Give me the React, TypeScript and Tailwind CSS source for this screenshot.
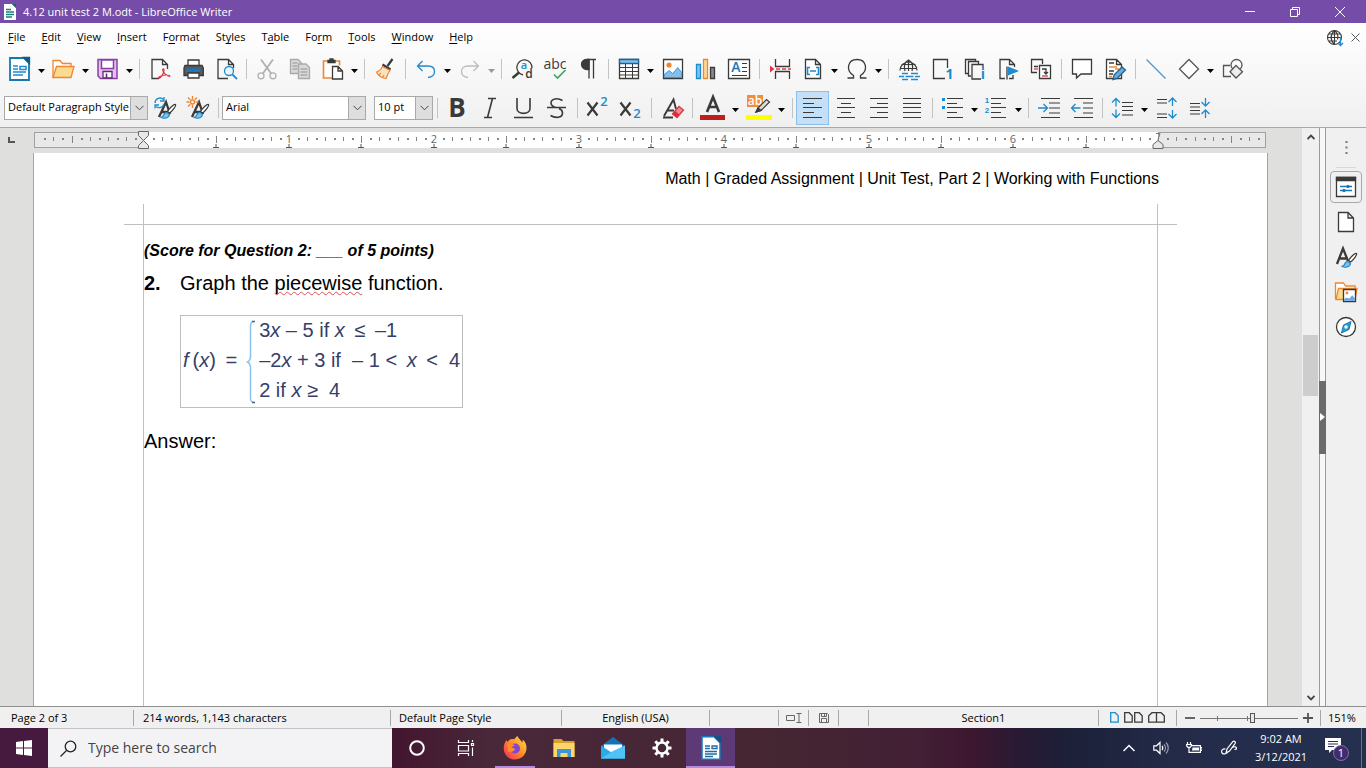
import type { ReactNode } from "react";

const INK = "#3a3a38";
const BLUE = "#1e8bcd";
const ORANGE = "#ed8733";

function Svg({ children, box = "0 0 24 24", className = "h-6 w-6" }: { children: ReactNode; box?: string; className?: string }) {
  return (
    <svg viewBox={box} className={`shrink-0 overflow-visible ${className}`} fill="none" stroke={INK} strokeWidth="1.3" aria-hidden="true">
      {children}
    </svg>
  );
}

function Glyph({ x, y, size, fill = INK, weight = 400, family = "Open Sans", children }: {
  x: number; y: number; size: number; fill?: string; weight?: number; family?: string; children: string;
}) {
  return (
    <text x={x} y={y} fontSize={size} fill={fill} stroke="none" fontWeight={weight} fontFamily={`"${family}", sans-serif`} textAnchor="middle">
      {children}
    </text>
  );
}

const brush = (
  <>
    <path d="M22.5 8.500c1 1-3 6.500-6 8.500l-2-1.500c2-3.500 7-8 8-7z" fill="#fff" strokeWidth="1.200" />
    <path d="M14 16.500c-2 0-3 1-3.500 3-.3 1.200-1.500 1.500-2.500 1.800 2.500 1.700 8 1.200 8.500-2.800z" fill="#83beec" stroke={BLUE} strokeWidth="1.200" />
  </>
);

function Lines({ rows }: { rows: [number, number][] }) {
  return <path d={rows.map(([a, b], i) => `M${a} ${2.5 + i * 5 - (i > 1 ? 1 : 0)}H${b}`).join("")} strokeWidth="1.200" />;
}

const icons: Record<string, ReactNode> = {
  "New": (
    <>
      <path d="M2 1h14l5 5v17H2z" fill="#fff" stroke="#1578b0" strokeWidth="1.800" />
      <path d="M15.500.5H21.500V6.500z" fill="#0d5c8c" stroke="#0d5c8c" />
      <path d="M5 9h5M5 12h5M5 15h13M5 18h10M12 9.500h6v3h-6z" stroke={BLUE} strokeWidth="1.500" />
    </>
  ),
  "Open": (
    <>
      <path d="M1 20.500V3.500h7l2.500 3H19v3" fill="#fff" stroke={ORANGE} />
      <path d="M1 20.500L4.500 9.500H22L19 20.500z" fill="#fbdb8f" stroke={ORANGE} />
    </>
  ),
  "Save": (
    <>
      <path d="M2 2.500h19v19H4.500L2 19z" fill="#e3c1ee" stroke="#8e3cab" strokeWidth="1.500" />
      <path d="M5.500 3v8.500h12V3z" fill="#fff" stroke="#8e3cab" strokeWidth="1.500" />
      <path d="M7 21v-6.500h9V21z" fill="#fff" stroke="#5e2d70" />
      <path d="M10.500 16.500V21" stroke="#5e2d70" strokeWidth="1.600" />
    </>
  ),
  "Export as PDF": (
    <>
      <path d="M11 21.500H4V2.500h10.500l5 5V12M14.500 2.500v5h5" />
      <path d="M15 12c2-1 .8 4-1 6.500s-3 3.500-3.500 2.500 5-3 7-3 4.500 0 4.500 1-5-.8-6.500-4-1-2.800-.5-3z" stroke="#dc3848" strokeWidth="1.200" />
    </>
  ),
  "Print": (
    <>
      <path d="M7 9V3h11v6" fill="#fff" />
      <path d="M4 8.500h17l1.300 2.500v7.500H3V11z" fill="#5a5a5a" />
      <path d="M6 11.500h13l1 3.500H5z" fill="#1b77bd" stroke="none" />
      <path d="M7 16h11v5H7z" fill="#fff" />
    </>
  ),
  "Print Preview": (
    <>
      <path d="M14 21.500H4V2.500h10.500l5 5V11M14.500 2.500v5h5" />
      <circle cx="15" cy="14" r="4.500" fill="#e8f5fd" stroke={BLUE} />
      <path d="M18.300 17.300L23 22" stroke={BLUE} strokeWidth="1.800" />
    </>
  ),
  "Cut": (
    <g stroke="#b0b0b0">
      <path d="M6 2.500l10.500 14.500M18 2.500L7.500 17" strokeWidth="1.800" />
      <circle cx="6" cy="18.800" r="3" /><circle cx="18" cy="18.800" r="3" />
    </g>
  ),
  "Copy": (
    <g stroke="#a9a9a9" fill="#d9d9d9">
      <path d="M2.500 2.500h7.500l3.500 3.500v10.500h-11z" />
      <path d="M4.500 6h5M4.500 9h5M4.500 12h5" />
      <path d="M10.500 7h7.500l3.500 3.500v11h-11z" />
      <path d="M12.500 12h7M12.500 15h7M12.500 18h7" />
    </g>
  ),
  "Paste": (
    <>
      <path d="M11 21H2.500V4h16v4.500" fill="#fff" stroke={ORANGE} strokeWidth="1.600" />
      <path d="M7 5.500v-2h2V2h3v1.500h2v2z" fill={INK} />
      <path d="M11.500 9.500h5.500l4.500 4.500v8h-10zM17 9.500V14h4.500" fill="#fff" />
    </>
  ),
  "Clone Formatting": (
    <>
      <path d="M19.500 2l-5 7" strokeWidth="2.200" />
      <path d="M9.500 7.500l8 5" strokeWidth="2.200" />
      <path d="M9.500 9.500c-1.500 3-4 5-6 5.500 1.500 3.500 5 6 9.500 6.500 1-3 2.500-6 4-8z" fill="#fbe3c0" stroke={ORANGE} strokeWidth="1.200" />
      <path d="M6 18l2-2M9.500 20.500l1.500-2.500" stroke={ORANGE} />
    </>
  ),
  "Undo": <path d="M8.500 4L3.500 9l5 5M3.500 9H14c4.500 0 6.500 2.500 6.500 5.500S18 20 14 20.500" stroke={BLUE} />,
  "Redo": <path d="M15.500 4l5 5-5 5M20.500 9H10c-4.500 0-6.500 2.500-6.500 5.500S6 20 10 20.500" stroke="#bcbcbc" />,
  "Find and Replace": (
    <>
      <path d="M13 18A7.600 7.600 0 1 1 22 11" />
      <path d="M9 15.500l-6.500 5.500" strokeWidth="2.400" />
      <Glyph x={14} y={12} size={11} fill={BLUE} weight={600}>a</Glyph>
      <Glyph x={19} y={21} size={12} weight={600}>d</Glyph>
    </>
  ),
  "Check Spelling": (
    <>
      <Glyph x={12} y={12} size={14}>abc</Glyph>
      <path d="M11 17.500l3.500 3.500 8-8" stroke="#3ba45e" strokeWidth="1.600" />
    </>
  ),
  "Formatting Marks": (
    <>
      <path d="M11 2.500H20M13 2.500V21.500M17.500 2.500V21.500" />
      <path d="M13 2.500C3 1 3 13.500 13 12.500z" fill={INK} />
    </>
  ),
  "Insert Table": (
    <>
      <path d="M2.500 2.500h19v19h-19z" fill="#fff" />
      <path d="M2.500 2.500h19v4h-19z" fill="#83beec" stroke="#1565a0" />
      <path d="M2.500 10.500h19M2.500 14.500h19M2.500 18h19M8.500 7v14M15.500 7v14" strokeWidth="1" />
    </>
  ),
  "Insert Image": (
    <>
      <path d="M2.500 2.500h19v19h-19z" fill="#fff" />
      <circle cx="8" cy="8" r="2.600" fill={ORANGE} stroke="none" />
      <path d="M3.200 20.500v-3l5-4 3.500 3 5-6 4 5v5z" fill="#83beec" stroke={BLUE} strokeWidth=".8" />
    </>
  ),
  "Insert Chart": (
    <>
      <path d="M2.500 7.500h4v14h-4z" fill="#83beec" stroke={BLUE} />
      <path d="M9.500 2.500h4v19h-4z" fill="#fbdb9f" stroke={ORANGE} />
      <path d="M16.500 10.500h4v11h-4z" fill="#888" />
    </>
  ),
  "Insert Text Box": (
    <>
      <path d="M1.500 2.500h21v19h-21z" fill="#fff" />
      <Glyph x={9} y={15} size={14} fill="#1779ba" weight={600}>A</Glyph>
      <path d="M15 6.500h5M15 10.500h5M15 14.500h5M5 18.500h15" strokeWidth="1.200" />
    </>
  ),
  "Insert Page Break": (
    <>
      <path d="M7.500 2v7.500h14V2M7.500 22v-7.500h14V22" />
      <path d="M8 12h15" stroke="#dc3848" strokeDasharray="4 2" />
      <path d="M2 8.500l4.500 3.500L2 15.500z" fill="#dc3848" stroke="none" />
    </>
  ),
  "Insert Field": (
    <>
      <path d="M4.500 2.500h10l5 5v14h-15zM14.500 2.500v5h5" fill="#fff" />
      <path d="M9 10.500H6.500v7H9M15 10.500h2.500v7H15M9 14h6" stroke={BLUE} strokeWidth="1.600" />
    </>
  ),
  "Special Character": <path d="M2.500 21h6v-2.500C0 13 3 2.500 12 2.500S24 13 15.500 18.500V21h6" />,
  "Insert Hyperlink": (
    <>
      <path d="M3 13.500a8.500 8.500 0 1 1 17 0M3 11.500h17M4.500 7.500h14M11.500 3v11M8 14c-1.500-5-.5-9 3.500-11 4 2 5 6 3.500 11" strokeWidth="1.200" />
      <path d="M5 16.500h6M14 16.500h7M2 19.500h5M8.500 19.500h8M18 19.500h5M5 22.500h6M14 22.500h7" stroke={BLUE} strokeWidth="1.700" />
    </>
  ),
  "Insert Footnote": (
    <>
      <path d="M15 21.500H3.500V2.500h14V11" />
      <Glyph x={19.500} y={22} size={14} fill={BLUE} weight={700}>1</Glyph>
    </>
  ),
  "Insert Endnote": (
    <>
      <path d="M5 16.500H2.500v-14h10v2M8 19H5.500V4.500h10V7M18 22H9V7.500h11V11" />
      <Glyph x={20} y={22} size={14} fill={BLUE} weight={700}>i</Glyph>
    </>
  ),
  "Insert Bookmark": (
    <>
      <path d="M9 21.500H4V2.500h9.500l5 5V10M13.500 2.500v5h5M11 9.500v13M17 18v3.500h-4" />
      <path d="M12 9.500l11 4.500-11 4.500z" fill={BLUE} stroke="none" />
    </>
  ),
  "Insert Cross-reference": (
    <>
      <path d="M8 15.500H2.500v-13h11V7M5 9.500h4" />
      <path d="M5 12h4" stroke="#dc3848" />
      <path d="M10.500 8.500h11v13h-11zM13 12h4v5M15 15l2 2 2-2" fill="#fff" />
      <path d="M13 19h6" stroke="#dc3848" />
    </>
  ),
  "Insert Comment": <path d="M2.500 2.500h19v14.500H11l-4.500 4v-4h-4z" fill="#fff" />,
  "Track Changes": (
    <>
      <path d="M3.500 2.500h10l5 5v14h-15zM13.500 2.500v5h5M6 6h5M6 14h5M6 17h4" fill="#fff" />
      <path d="M6 10h8M12 12h4M6 19.500h3" stroke={ORANGE} />
      <path d="M10 22.500l1-4.500 8-8 3.500 3-8.500 8.500z" fill="#6fa9d6" stroke="#1b6699" />
    </>
  ),
  "Insert Line": <path d="M2.500 2.500l19 19" stroke="#4a97d6" />,
  "Basic Shapes": <path d="M12 2.500l9.500 9.500-9.500 9.500L2.500 12z" fill="#fff" stroke="#555" />,
  "Show Draw Functions": (
    <g stroke="#555">
      <path d="M10 19.500H2.500v-11H9" />
      <circle cx="15.500" cy="8" r="5.500" />
      <path d="M15 8.500l6.500 6.200-6.500 6.300-6-6.300z" fill="#eee" />
    </g>
  ),
  "Update Style": (
    <>
      <path d="M6 21L13 6l4 12M8.500 16h7" strokeWidth="2.300" />
      <path d="M2 7a5 5 0 0 1 8.500-3.500M11 1v4H7M11 8a5 5 0 0 1-8 2.500M2 12.500V9h4" stroke={BLUE} />
      {brush}
    </>
  ),
  "New Style": (
    <>
      <path d="M6 21L13 6l4 12M8.500 16h7" strokeWidth="2.300" />
      <path d="M6.500 0v3M6.500 9v3M.5 6h3M9.500 6h3M2 1.500l2.300 2.300M11 1.500L8.700 3.800M2 10.500l2.300-2.300" stroke={ORANGE} />
      <circle cx="6.500" cy="6" r="2" stroke={ORANGE} />
      {brush}
    </>
  ),
  "Bold": <Glyph x={11} y={21} size={26} weight={700}>B</Glyph>,
  "Italic": <path d="M9 2.500h8M5 21.500h8M13.500 2.500l-5 19" strokeWidth="1.600" />,
  "Underline": <path d="M5 2v10.500c0 6.500 13 6.500 13 0V2M2 21.500h19" strokeWidth="1.600" />,
  "Strikethrough": (
    <path d="M17.500 4.500c-5-3-11.500-2-11.500 2.500 0 3 3 4 5.500 4.700M2 11.500h19M14 12.500c2.500 1 3.500 2.500 3.500 4.500 0 5-7 5.500-12 2.500" strokeWidth="1.600" />
  ),
  "Superscript": (
    <>
      <path d="M1.500 6.500l10 13M11.500 6.500l-10 13" strokeWidth="2.200" />
      <Glyph x={18} y={10} size={13} fill={BLUE} weight={600}>2</Glyph>
    </>
  ),
  "Subscript": (
    <>
      <path d="M1.500 6.500l10 13M11.500 6.500l-10 13" strokeWidth="2.200" />
      <Glyph x={18} y={22} size={13} fill={BLUE} weight={600}>2</Glyph>
    </>
  ),
  "Clear Formatting": (
    <>
      <path d="M4 20L13.500 3.500 16 13M7 14.500h7M3 21.500h10" strokeWidth="1.900" />
      <path d="M12.500 18l6.500-7.500 4.500 3.500-6.500 7.500z" fill="#f08a92" stroke="#dc3848" />
      <path d="M12.500 18l2.500-3 4.500 3.500-2.500 3z" fill="#dc2c3c" stroke="none" />
    </>
  ),
  "Font Color": (
    <>
      <path d="M6 16L12 1l6 15M8 11h8" strokeWidth="2.600" />
      <path d="M-1 21.500h25" stroke="#bf1e1e" strokeWidth="5" />
    </>
  ),
  "Highlighting": (
    <>
      <path d="M0-1h16v12H0z" fill="#f18d3d" stroke="none" />
      <Glyph x={8} y={9} size={12} fill="#fff" weight={600}>ab</Glyph>
      <path d="M11 12l8.500-8.500 3 2.500L14 14.500l-5 1.500z" fill="#ddd" strokeWidth="1.200" />
      <path d="M9 16l2-4 3 2.500z" fill={INK} />
      <path d="M-1 21.500h26" stroke="#ffff00" strokeWidth="5" />
    </>
  ),
  "Align Left": <Lines rows={[[2, 21], [2, 13], [2, 21], [2, 13], [2, 21]]} />,
  "Align Center": <Lines rows={[[3, 21], [7, 17], [3, 21], [7, 17], [3, 21]]} />,
  "Align Right": <Lines rows={[[3, 21], [10, 21], [3, 21], [10, 21], [3, 21]]} />,
  "Justified": <Lines rows={[[3, 21], [3, 21], [3, 21], [3, 21], [3, 21]]} />,
  "Bullets": (
    <>
      <Lines rows={[[6, 22], [6, 16], [6, 22], [6, 16], [6, 22]]} />
      <path d="M1 2h3v3H1zM1 10h3v3H1z" fill={BLUE} stroke="none" />
    </>
  ),
  "Numbering": (
    <>
      <Lines rows={[[6, 21], [6, 16], [6, 21], [6, 16], [6, 21]]} />
      <Glyph x={2} y={7} size={8} fill={BLUE} weight={700} family="Liberation Sans">1</Glyph>
      <Glyph x={2} y={17} size={8} fill={BLUE} weight={700} family="Liberation Sans">2</Glyph>
    </>
  ),
  "Increase Indent": (
    <>
      <path d="M4 2.500h19M12 7h11M12 12h11M12 17h11M4 21.500h19" strokeWidth="1.200" />
      <path d="M1 12h9M6.500 8l4 4-4 4" stroke={BLUE} />
    </>
  ),
  "Decrease Indent": (
    <>
      <path d="M4 2.500h19M13 7h10M13 12h10M13 17h10M4 21.500h19" strokeWidth="1.200" />
      <path d="M10.500 12h-9M5.500 8l-4 4 4 4" stroke={BLUE} />
    </>
  ),
  "Line Spacing": (
    <>
      <path d="M11 6.500h11M11 10.500h11M11 14.500h11M11 19h11" strokeWidth="1.200" />
      <path d="M5 10.500v-8M1 6.500l4-4 4 4M5 13.500v8M1 17.500l4 4 4-4" stroke={BLUE} />
    </>
  ),
  "Increase Paragraph Spacing": (
    <>
      <path d="M2 3.500h10M2 7h10M2 18h10M2 21.500h10" strokeWidth="1.200" />
      <path d="M17.500 10V2M13.500 6l4-4 4 4M17.500 14v8M13.500 18l4 4 4-4" stroke={BLUE} />
    </>
  ),
  "Decrease Paragraph Spacing": (
    <>
      <path d="M2 7.500h10M2 11h10M2 14.500h10M2 18h10" strokeWidth="1.200" />
      <path d="M17.500 2v8M13.500 6l4 4 4-4M17.500 22v-8M13.500 18l4-4 4 4" stroke={BLUE} />
    </>
  ),
  "Properties": (
    <>
      <path d="M2.500 2.500h19v19h-19z" fill="#fff" />
      <path d="M2.500 2.500h19v3h-19z" fill={INK} />
      <path d="M6 11.500h12M6 15.500h12" stroke="#1779ba" />
      <path d="M14 10v3M10 14v3" stroke="#1779ba" strokeWidth="2.500" />
    </>
  ),
  "Page": <path d="M4.500 2.500h9.500l5.500 5.500v13.500h-15zM14 2.500V8h5.500" fill="#fff" />,
  "Styles": (
    <>
      <path d="M3 19L9 3.500l5 12.500M5 13.500h8" strokeWidth="2.300" />
      {brush}
    </>
  ),
  "Gallery": (
    <>
      <path d="M1.500 19V3h8l2 3H21v3" fill="#fff" stroke={ORANGE} />
      <path d="M2 19.500L4.500 8.500H23l-2 11z" fill="#fbdb8f" stroke={ORANGE} />
      <path d="M9.500 9.500h12v12h-12z" fill="#fff" />
      <circle cx="13" cy="13" r="1.400" fill={ORANGE} stroke="none" />
      <path d="M10.200 20.800v-2l3-1 2 1 3-3.500 2.600 3v2.500z" fill="#6aa5e8" stroke="none" />
    </>
  ),
  "Navigator": (
    <>
      <circle cx="12" cy="12" r="9.500" fill="#fff" />
      <path d="M17 6.500l-2 8-7.500 3.500 2-8z" fill="#2d9bc8" stroke="#1779ba" strokeWidth="1" />
      <circle cx="12" cy="12" r="1.700" fill="#fff" stroke="none" />
    </>
  ),
};

function Arrow({ dim }: { dim?: boolean }) {
  return (
    <svg viewBox="0 0 7 4" className="h-1 w-[7px] shrink-0" aria-hidden="true">
      <path d="M0 0h7L3.500 4z" fill={dim ? "#999" : "#000"} />
    </svg>
  );
}

function Tool({ name, menu, wide, dim, active }: { name: string; menu?: boolean; wide?: boolean; dim?: boolean; active?: boolean }) {
  return (
    <>
      <button
        aria-label={name}
        className={`flex h-[34px] w-[33px] shrink-0 items-center pl-[5px] ${active ? "bg-[#c4e0f8] outline-1 -outline-offset-1 outline-[#8cc0ea]" : ""}`}
      >
        <Svg>{icons[name]}</Svg>
      </button>
      {menu && (
        <button aria-label={`${name} options`} className={`flex h-[34px] shrink-0 items-center justify-center pt-1 ${wide ? "w-[13px]" : "w-[11px]"}`}>
          <Arrow dim={dim} />
        </button>
      )}
    </>
  );
}

function Sep() {
  return <div className="ml-[4px] mr-[3px] h-5 w-px shrink-0 bg-[#c3c3c3]" />;
}

function Combo({ label, value, className }: { label: string; value: string; className: string }) {
  return (
    <div className={`relative shrink-0 ${className}`}>
      <select aria-label={label} className="block h-6 w-full appearance-none border border-[#a9a9a9] bg-white pl-[3px] text-[11px] text-black">
        <option>{value}</option>
      </select>
      <span className="pointer-events-none absolute inset-y-0 right-0 flex w-[18px] items-center justify-center border border-[#a9a9a9] bg-[#dedede]">
        <svg viewBox="0 0 9 6" className="h-[6px] w-[9px]" fill="none" stroke="#444" aria-hidden="true">
          <path d="M.5.8l4 4 4-4" />
        </svg>
      </span>
    </div>
  );
}

// label and the index of its access key
const menus: [string, number][] = [
  ["File", 0], ["Edit", 0], ["View", 0], ["Insert", 0], ["Format", 1], ["Styles", 2],
  ["Table", 1], ["Form", 2], ["Tools", 0], ["Window", 0], ["Help", 0],
];

function TitleBar() {
  return (
    <header className="flex h-[23px] shrink-0 items-center bg-[#754da8] pr-[3px] text-white">
      <svg viewBox="0 0 12 16" className="ml-1 h-4 w-3" aria-hidden="true">
        <path d="M0 0h8l4 4v12H0z" fill="#fff" />
        <path d="M8 0h4v4z" fill="#0d6a6a" />
        <path d="M2 5.500h5M2 8h8M2 10.500h8M2 13h6" stroke="#1b8079" strokeWidth="1.300" />
      </svg>
      <h1 className="ml-[7px] flex-1 pt-px text-[11px]">4.12 unit test 2 M.odt - LibreOffice Writer</h1>
      <button aria-label="Minimize" className="flex h-full w-[45px] items-center justify-center">
        <svg viewBox="0 0 10 10" className="h-[10px] w-[10px]" stroke="#fff"><path d="M0 4.500h10" /></svg>
      </button>
      <button aria-label="Restore" className="flex h-full w-[45px] items-center justify-center">
        <svg viewBox="0 0 10 10" className="h-[10px] w-[10px]" fill="none" stroke="#fff"><path d="M.5 2.500h7v7h-7zM2.500 2V.5h7v7H8" /></svg>
      </button>
      <button aria-label="Close" className="flex h-full w-[46px] items-center justify-center">
        <svg viewBox="0 0 10 10" className="h-[10px] w-[10px]" stroke="#fff"><path d="M0 0l10 10M10 0L0 10" /></svg>
      </button>
    </header>
  );
}

function MenuBar() {
  return (
    <nav className="flex h-[27px] items-center pt-[2px]">
      {menus.map(([label, key]) => (
        <button key={label} className="px-2 text-[11px]">
          {label.slice(0, key)}
          <span className="underline underline-offset-2">{label[key]}</span>
          {label.slice(key + 1)}
        </button>
      ))}
      <button aria-label="Check for updates" className="ml-auto mr-[7px]">
        <Svg box="0 0 18 18" className="h-[18px] w-[18px]">
          <path d="M8.500 1.500a7 7 0 1 0 0 14 7 7 0 0 0 0-14zM8.500 1.500v14M1.500 8.500h14M3 5h11M3 12h8M8.500 1.500c-4.500 4-4.500 10 0 14M8.500 1.500c3 2.500 4 6 3 9" strokeWidth="1.100" />
          <path d="M14.500 8v8.500M12 14l2.500 2.500L17 14" stroke={BLUE} />
        </Svg>
      </button>
      <button aria-label="Close document" className="mr-[6px]">
        <svg viewBox="0 0 9 9" className="h-[9px] w-[9px]" stroke="#555"><path d="M.5.5l8 8M8.500.5l-8 8" /></svg>
      </button>
    </nav>
  );
}

function StandardToolbar() {
  return (
    <div className="flex h-[38px] items-center pl-[3px]">
      <Tool name="New" menu />
      <Tool name="Open" menu />
      <Tool name="Save" menu />
      <Sep />
      <Tool name="Export as PDF" />
      <Tool name="Print" />
      <Tool name="Print Preview" />
      <Sep />
      <Tool name="Cut" />
      <Tool name="Copy" />
      <Tool name="Paste" menu />
      <Sep />
      <Tool name="Clone Formatting" />
      <Sep />
      <Tool name="Undo" menu />
      <Tool name="Redo" menu dim />
      <Sep />
      <Tool name="Find and Replace" />
      <Tool name="Check Spelling" />
      <Tool name="Formatting Marks" />
      <Sep />
      <Tool name="Insert Table" menu />
      <Tool name="Insert Image" />
      <Tool name="Insert Chart" />
      <Tool name="Insert Text Box" />
      <Sep />
      <Tool name="Insert Page Break" />
      <Tool name="Insert Field" menu />
      <Tool name="Special Character" menu />
      <Sep />
      <Tool name="Insert Hyperlink" />
      <Tool name="Insert Footnote" />
      <Tool name="Insert Endnote" />
      <Tool name="Insert Bookmark" />
      <Tool name="Insert Cross-reference" />
      <Sep />
      <Tool name="Insert Comment" />
      <Tool name="Track Changes" />
      <Sep />
      <Tool name="Insert Line" />
      <Tool name="Basic Shapes" menu />
      <Tool name="Show Draw Functions" />
    </div>
  );
}

function FormattingToolbar() {
  return (
    <div className="flex h-[39px] items-center pl-1">
      <Combo label="Paragraph style" value="Default Paragraph Style" className="w-[144px]" />
      <Tool name="Update Style" />
      <Tool name="New Style" />
      <Sep />
      <Combo label="Font name" value="Arial" className="w-[144px]" />
      <Combo label="Font size" value="10 pt" className="ml-2 w-[59px]" />
      <Sep />
      <Tool name="Bold" />
      <Tool name="Italic" />
      <Tool name="Underline" />
      <Tool name="Strikethrough" />
      <Sep />
      <Tool name="Superscript" />
      <Tool name="Subscript" />
      <Sep />
      <Tool name="Clear Formatting" />
      <Sep />
      <Tool name="Font Color" menu wide />
      <Tool name="Highlighting" menu wide />
      <Sep />
      <Tool name="Align Left" active />
      <Tool name="Align Center" />
      <Tool name="Align Right" />
      <Tool name="Justified" />
      <Sep />
      <Tool name="Bullets" menu />
      <Tool name="Numbering" menu />
      <Sep />
      <Tool name="Increase Indent" />
      <Tool name="Decrease Indent" />
      <Sep />
      <Tool name="Line Spacing" menu />
      <Tool name="Increase Paragraph Spacing" />
      <Tool name="Decrease Paragraph Spacing" />
    </div>
  );
}

// one inch at 151% zoom, and where the left margin sits inside the ruler
const INCH = 144.9;
const ZERO = 110;

function Ruler() {
  const marks = Array.from({ length: 135 }, (_, i) => i - 11);
  return (
    <div className="flex h-[25px] shrink-0 items-start pr-9 pt-1">
      <svg viewBox="0 0 34 16" className="h-4 w-[34px] shrink-0" fill="none" stroke="#555" strokeWidth="2" aria-hidden="true">
        <path d="M9 5v5h6" />
      </svg>
      <div className="relative flex h-4 flex-1">
        <div className="w-[110px] border border-[#a0a0a0] bg-[#e8e8e8]" />
        <div className="flex-1 bg-white" />
        <div className="w-[108px] border border-[#a0a0a0] bg-[#e8e8e8]" />
        <svg className="absolute inset-0 h-[18px] w-full overflow-visible" aria-hidden="true">
          {marks.map((m) => {
            const x = Math.round(ZERO + (m * INCH) / 16);
            if (m === 0 || m === 112) return null;
            if (m > 0 && m % 16 === 0) {
              return (
                <text key={m} x={x} y={11} fontSize="11" fill="#666" textAnchor="middle" fontFamily='"Open Sans", sans-serif'>
                  {m / 16}
                </text>
              );
            }
            const h = m % 8 === 0 ? 7 : m % 2 === 0 ? 4 : 2;
            return <rect key={m} x={x} y={7 - Math.floor(h / 2)} width={h === 2 ? 2 : 1} height={h} fill="#858585" />;
          })}
          {marks.filter((m) => m > 0 && m < 112 && m % 8 === 0).map((m) => {
            const x = Math.round(ZERO + (m * INCH) / 16);
            return <path key={m} d={`M${x - 3} 15.500h6M${x} 12v3`} stroke="#555" />;
          })}
          <path d="M104.500-.5h10v4l-5 5-5-5zM104.500 16.500v-3l5-5 5 5v3z" fill="#e8e8e8" stroke="#666" />
        </svg>
        <svg viewBox="0 0 12 18" className="absolute right-[102px] top-0 h-[18px] w-3" aria-hidden="true">
          <path d="M1 16.500v-4l5-4 5 4v4z" fill="#e8e8e8" stroke="#666" />
          <path d="M4 1.500h4L6 8" fill="none" stroke="#777" />
        </svg>
      </div>
    </div>
  );
}

function Formula() {
  return (
    <figure className="ml-9 mt-5 flex h-[93px] w-[283px] items-center whitespace-pre border border-[#bdbdbd] pb-1 pl-[2px] text-xl leading-[30px] text-[#34406a]">
      <div><i>f</i>{"\u2009"}(<i>x</i>){"\u2009"} =</div>
      <svg viewBox="0 0 10 84" className="ml-2 mr-1 mt-1 h-[84px] w-[10px]" fill="none" stroke="#8cc3ee" strokeWidth="1.500" aria-hidden="true">
        <path d="M9 1.500C6 1.500 5.500 3 5.500 6v30c0 4-1 5-3 6 2 1 3 2 3 6v30c0 3 .5 4 3.500 4.500" />
        <path d="M7 1.500h3M7 82.500h3" stroke="#51628f" />
      </svg>
      <div>
        <p>3<i>x</i> – 5 if <i>x</i>{"\u2009"} ≤{"\u2009"} –1</p>
        <p>–2<i>x</i> + 3 if  – 1 &lt;{"\u2009"} <i>x</i>{"\u2009"} &lt;  4</p>
        <p>2 if <i>x</i> ≥  4</p>
      </div>
    </figure>
  );
}

function Paper() {
  return (
    <div className="flex min-h-0 flex-1 pl-[33px] pr-[34px]">
      <article className="flex min-w-0 flex-1 flex-col overflow-hidden border-x border-[#a5a5a5] bg-white font-['Liberation_Sans',Arial,sans-serif] text-black">
        <p className="pl-[110px] pr-[108px] pt-4 text-right text-base leading-5">
          Math | Graded Assignment | Unit Test, Part 2 | Working with Functions
        </p>
        <div className="mt-[15px] flex h-[21px] shrink-0 px-[90px]">
          <div className="w-5 border-b border-r border-[#c0c0c0]" />
          <div className="flex-1 border-b border-[#c0c0c0]" />
          <div className="w-5 border-b border-l border-[#c0c0c0]" />
        </div>
        <div className="mx-[109px] flex-1 border-x border-[#c0c0c0] pt-4 text-xl leading-6">
          <p className="text-base font-bold italic leading-5">(Score for Question 2: ___ of 5 points)</p>
          <div className="mt-[10px] flex">
            <b className="w-9">2.</b>
            <p>
              Graph the{" "}
              <span className="underline decoration-[#e0505a] decoration-wavy decoration-1 underline-offset-1 [text-decoration-skip-ink:none]">piecewise</span>{" "}
              function.
            </p>
          </div>
          <Formula />
          <p className="mt-[21px]">Answer:</p>
        </div>
      </article>
    </div>
  );
}

function ScrollBar() {
  return (
    <div className="flex w-[17px] shrink-0 flex-col items-center bg-[#f0f0f0]">
      <button aria-label="Scroll up" className="flex h-[17px] w-full items-center justify-center">
        <svg viewBox="0 0 8 6" className="h-[6px] w-2" fill="none" stroke="#444" strokeWidth="1.800"><path d="M.5 5L4 1.500 7.500 5" /></svg>
      </button>
      <div className="w-full flex-[190]" />
      <div className="w-[15px] flex-[61] bg-[#cdcdcd]" />
      <div className="w-full flex-[293]" />
      <button aria-label="Scroll down" className="flex h-[17px] w-full items-center justify-center">
        <svg viewBox="0 0 8 6" className="h-[6px] w-2" fill="none" stroke="#444" strokeWidth="1.800"><path d="M.5 1L4 4.500 7.500 1" /></svg>
      </button>
    </div>
  );
}

function Sidebar() {
  return (
    <>
      <div className="flex w-[7px] shrink-0 flex-col justify-center border-x border-[#9b9b9b] bg-[#f7f7f7]">
        <button aria-label="Hide sidebar" className="-mx-px flex h-[73px] items-center justify-center bg-[#6b6b6b]">
          <svg viewBox="0 0 5 8" className="h-2 w-[5px]"><path d="M0 0l5 4-5 4z" fill="#fff" /></svg>
        </button>
      </div>
      <aside className="flex w-10 shrink-0 flex-col items-center bg-[#f0f0f0]">
        <button aria-label="Sidebar settings" className="flex h-[39px] w-8 items-center justify-center">
          <svg viewBox="0 0 3 13" className="h-[13px] w-[3px]" fill="#777"><path d="M.5 0h2v2h-2zM.5 5.500h2v2h-2zM.5 11h2v2h-2z" /></svg>
        </button>
        <div className="mb-[3px] h-px w-5 bg-[#d8d8d8]" />
        {["Properties", "Page", "Styles", "Gallery", "Navigator"].map((name) => (
          <button
            key={name}
            aria-label={name}
            className={`mb-[3px] flex h-8 w-8 items-center justify-center rounded-sm border ${name === "Properties" ? "border-[#a8a8a8]" : "border-transparent"}`}
          >
            <Svg>{icons[name]}</Svg>
          </button>
        ))}
      </aside>
    </>
  );
}

function Cell({ className, children }: { className: string; children?: ReactNode }) {
  return <div className={`flex h-4 shrink-0 items-center border-r border-[#a8a8a8] ${className}`}>{children}</div>;
}

function StatusBar() {
  return (
    <footer className="flex h-[22px] shrink-0 items-center border-t border-[#8f8f8f] bg-[#f0f0f0] text-[11px]">
      <Cell className="w-[134px] pl-[11px] pt-[2px]">Page 2 of 3</Cell>
      <Cell className="w-[257px] pl-[9px] pt-[2px]">214 words, 1,143 characters</Cell>
      <Cell className="w-[171px] pl-2 pt-[2px]">Default Page Style</Cell>
      <Cell className="w-[148px] justify-center pt-[2px]">English (USA)</Cell>
      <Cell className="w-[69px]" />
      <Cell className="w-[30px] justify-center">
        <Svg box="0 0 18 12" className="h-3 w-[18px]"><path d="M1.500 3.500h8v5h-8zM11.500 1.500h5M14 1.500v9M11.500 10.500h5" stroke="#666" strokeWidth="1" /></Svg>
      </Cell>
      <Cell className="w-[30px] justify-center">
        <Svg box="0 0 12 12" className="h-3 w-3"><path d="M1.500 1.500h8l1 1v8h-9zM3.500 1.500v3h5v-3M3.500 10.500v-4h5v4M6.500 2v2" stroke="#666" strokeWidth="1" /></Svg>
      </Cell>
      <Cell className="w-[30px]" />
      <Cell className="min-w-20 flex-1 justify-center pt-[2px]">Section1</Cell>
      <Cell className="w-[78px] justify-center gap-[5px]">
        <button aria-label="Single-page view">
          <Svg box="0 0 9 11" className="h-[11px] w-[9px]"><path d="M.7.7h4.500l3 3v6.500H.7z" stroke={BLUE} /></Svg>
        </button>
        <button aria-label="Multiple-page view">
          <Svg box="0 0 19 11" className="h-[11px] w-[19px]"><path d="M.7.7h4.500l3 3v6.500H.7zM10.700.7h4.500l3 3v6.500h-7.500z" /></Svg>
        </button>
        <button aria-label="Book view">
          <Svg box="0 0 17 11" className="h-[11px] w-[17px]"><path d="M8.500 10.200V.7H4l-3.300 3v6.500zM8.500 10.200V.7H13l3.300 3v6.500z" /></Svg>
        </button>
      </Cell>
      <Cell className="w-[144px] justify-center gap-[5px]">
        <button aria-label="Zoom out"><Svg box="0 0 10 10" className="h-[10px] w-[10px]"><path d="M0 5h10" stroke="#555" strokeWidth="1.800" /></Svg></button>
        <div className="relative flex h-4 w-[98px] items-center">
          <svg viewBox="0 0 98 16" className="pointer-events-none absolute inset-0 h-4 w-full" stroke="#777" aria-hidden="true">
            <path d="M0 8.500h98M17.500 6v5M47.500 6v5" />
          </svg>
          <input
            type="range"
            aria-label="Zoom"
            min={0}
            max={100}
            defaultValue={54}
            className="relative h-4 w-full appearance-none bg-transparent [&::-webkit-slider-thumb]:h-[10px] [&::-webkit-slider-thumb]:w-[5px] [&::-webkit-slider-thumb]:appearance-none [&::-webkit-slider-thumb]:border [&::-webkit-slider-thumb]:border-[#555] [&::-webkit-slider-thumb]:bg-[#e8e8e8]"
          />
        </div>
        <button aria-label="Zoom in"><Svg box="0 0 10 10" className="h-[10px] w-[10px]"><path d="M0 5h10M5 0v10" stroke="#555" strokeWidth="1.800" /></Svg></button>
      </Cell>
      <button className="w-[45px] shrink-0 pl-[7px] pt-[2px] text-left">151%</button>
    </footer>
  );
}

const taskApps: { name: string; running?: boolean; active?: boolean; art: ReactNode }[] = [
  { name: "Cortana", art: <circle cx="12" cy="12" r="6.800" stroke="#fff" strokeWidth="2" /> },
  {
    name: "Task View",
    art: <path d="M4.500 4v2.500h10V4M4.500 9.500h10v5.500h-10zM4.500 20v-2.500h10V20M18.500 4v2M18.500 11.500V20M17.500 7.500h2v2h-2z" stroke="#fff" strokeWidth="1.200" />,
  },
  {
    name: "Firefox",
    running: true,
    art: (
      <g stroke="none">
        <defs>
          <linearGradient id="fox" x1="1" y1="0" x2="0" y2="1">
            <stop offset="0" stopColor="#ffe14a" />
            <stop offset=".45" stopColor="#ff9327" />
            <stop offset="1" stopColor="#ed2260" />
          </linearGradient>
        </defs>
        <path d="M14.500 0c1 3 4 4 4.500 6.500 1-1 .8-2 .6-3C23 6.500 24 10 23.300 14 22 20 17.500 23.500 12 23.500 5.500 23.500.7 18.500.7 12.500c0-4 1.300-6.500 3-8.500 0 1 .3 1.500.8 2 1.500-2 3-3 4.500-3 .8 0 1.500.2 2 .4C12 2.300 13 1 14.500 0z" fill="url(#fox)" />
        <circle cx="12" cy="12.500" r="5" fill="#7e46d8" />
        <path d="M4.500 8c3-1.500 6 0 7.500 2-1.500-.3-3 .5-3.500 1.500 2 .3 3.500 1 3.500 2-1 2-4 3-7 2z" fill="#ff8a2a" />
      </g>
    ),
  },
  {
    name: "File Explorer",
    art: (
      <g stroke="none">
        <path d="M1.500 3h8l2 2h11v16h-21z" fill="#d8a02c" />
        <path d="M1.500 7h21v14h-21z" fill="#fcd668" />
        <path d="M5 21v-8h14v8h-3.500v-4h-7v4z" fill="#3d94d8" />
      </g>
    ),
  },
  {
    name: "Mail",
    art: (
      <g stroke="none">
        <path d="M0 10L12 1l12 9v12.500H0z" fill="#1672b8" />
        <path d="M3 8.500h18v8H3z" fill="#fff" />
        <path d="M0 9.500l12 8 12-8v13H0z" fill="#2ba9e8" />
        <path d="M0 22.500L12 15l12-5.500v13z" fill="#50c3f4" />
      </g>
    ),
  },
  {
    name: "Settings",
    art: (
      <g stroke="#fff">
        <circle cx="12" cy="12" r="5.500" strokeWidth="2.500" />
        <path d="M12 2.500v4M12 17.500v4M2.500 12h4M17.500 12h4M5.300 5.300l2.800 2.800M15.900 15.900l2.800 2.800M18.700 5.300l-2.800 2.800M8.100 15.900l-2.800 2.800" strokeWidth="3" />
      </g>
    ),
  },
  {
    name: "LibreOffice Writer",
    running: true,
    active: true,
    art: (
      <>
        <path d="M3 .8h12l6 6v16.400H3z" fill="#fff" stroke="#1d77b5" strokeWidth="1.500" />
        <path d="M14.500 0H22v7.500z" fill="#134f85" stroke="none" />
        <path d="M6 10h5M6 12.500h5M6 15.500h12M6 18h12M6 20.500h8M13 10h5v2.500h-5z" stroke="#1d6da5" />
      </>
    ),
  },
];

function TaskBar() {
  return (
    <div className="flex h-10 shrink-0 bg-[linear-gradient(90deg,#461a3f_0%,#43162f_29%,#49283a_36%,#452632_56%,#432035_67%,#3d1730_71%,#271a33_75%,#1c2038_78%,#232b49_86%,#25304f_100%)] text-white">
      <button aria-label="Start" className="flex w-12 shrink-0 items-center justify-center">
        <svg viewBox="0 0 16 16" className="h-4 w-4" fill="#fff"><path d="M0 2l7-1v6.500H0zM8 .9L16 0v7.500H8zM0 8.500h7V15l-7-1zM8 8.500h8V16l-8-1z" /></svg>
      </button>
      <label className="flex w-[344px] shrink-0 items-center border-y border-[#c5c5c8] bg-[#f3f3f5] pl-3">
        <Svg box="0 0 17 17" className="h-[17px] w-[17px]"><circle cx="10.500" cy="6.500" r="5.300" stroke="#222" /><path d="M6.500 10.500l-6 6" stroke="#222" /></Svg>
        <input aria-label="Search" placeholder="Type here to search" className="ml-[11px] w-full bg-transparent text-sm text-[#444] outline-none placeholder:text-[#444]" />
      </label>
      {taskApps.map((app) => (
        <button
          key={app.name}
          aria-label={app.name}
          className={`flex w-[49px] shrink-0 flex-col items-center justify-between pt-2 ${app.active ? "bg-[#5d3a76]" : ""}`}
        >
          <Svg>{app.art}</Svg>
          {app.running && <span className={`h-[2px] bg-[#b48be0] ${app.active ? "w-full" : "w-10"}`} />}
        </button>
      ))}
      <div className="ml-auto flex items-center">
        <button aria-label="Show hidden icons" className="mr-[18px]">
          <svg viewBox="0 0 12 8" className="h-2 w-3" fill="none" stroke="#fff" strokeWidth="1.500"><path d="M.5 7L6 1.500 11.500 7" /></svg>
        </button>
        <button aria-label="Volume" className="mr-[17px]">
          <svg viewBox="0 0 16 14" className="h-[14px] w-4" fill="none" stroke="#fff" strokeWidth="1.200">
            <path d="M.8 4.800h2.700L7 1.500v11L3.500 9.200H.8zM9 5c1 1.200 1 2.800 0 4" />
            <path d="M11 3.500c2 2 2 5 0 7M13 1.500c3 3 3 8 0 11" stroke="#9a9db0" />
          </svg>
        </button>
        <button aria-label="Battery" className="mr-[19px]">
          <svg viewBox="0 0 16 12" className="h-3 w-4" fill="none" stroke="#fff" strokeWidth="1.200">
            <path d="M5 3.600h9.400v6.800H3V8M14.500 5.500H16v3h-1.500M1.500 0v2M4.500 0v2M.5 2.500h5c0 4-5 4-5 0zM3 5v3" />
            <path d="M6.500 5.500h6.500v3H6z" fill="#fff" stroke="none" />
          </svg>
        </button>
        <button aria-label="Windows Ink Workspace" className="mr-[18px]">
          <svg viewBox="0 0 16 16" className="h-4 w-4" fill="none" stroke="#fff" strokeWidth="1.200">
            <path d="M4.500 9C2 8.500 0 10 .8 12.500s5 1.500 6.500-1M5 13l1-4 6-7.500c1-1 3 .5 2.200 1.800L8.500 11zM11.500 7.500c2-1.500 4-.5 4 .8s-1 1.200-2 1" />
          </svg>
        </button>
        <button className="w-[52px] text-center text-[11px] leading-[18px]">
          9:02 AM
          <br />
          3/12/2021
        </button>
        <button aria-label="1 new notification" className="relative ml-[18px] mr-3 h-6 w-6">
          <svg viewBox="0 0 24 24" className="h-6 w-6">
            <path d="M0 2h16v12H7l-3 3v-3H0z" fill="#fff" />
            <path d="M3 5.500h10M3 8h10M3 10.500h6" stroke="#2a3150" />
          </svg>
          <span className="absolute left-2 top-[9px] flex h-4 w-4 items-center justify-center rounded-full border border-[#7d70a5] bg-[#432c6b] text-[11px]">1</span>
        </button>
        <div className="mr-1 h-10 w-px bg-[#6a7088]" />
      </div>
    </div>
  );
}

export default function App() {
  return (
    <div className="flex h-screen flex-col overflow-hidden bg-[#f0f0f0] font-['Open_Sans',sans-serif] text-black">
      <TitleBar />
      <div className="shrink-0 border-b border-[#a8a8a8] bg-linear-to-b from-white to-[#f0f0f0]">
        <MenuBar />
        <StandardToolbar />
        <FormattingToolbar />
      </div>
      <main className="flex min-h-0 flex-1">
        <section className="flex min-w-0 flex-1 flex-col bg-[#dfdfdd]">
          <Ruler />
          <Paper />
        </section>
        <ScrollBar />
        <Sidebar />
      </main>
      <StatusBar />
      <TaskBar />
    </div>
  );
}
